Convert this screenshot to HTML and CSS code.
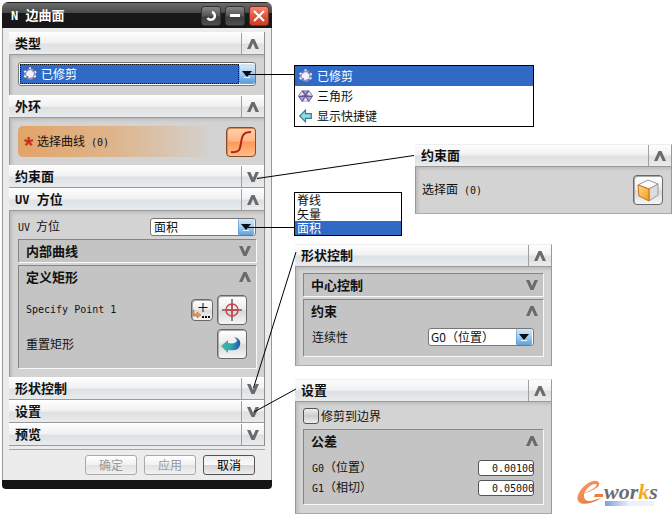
FILE: index.html
```html
<!DOCTYPE html>
<html lang="zh-CN">
<head>
<meta charset="utf-8">
<title>N 边曲面</title>
<link rel="stylesheet" href="styles.css">
</head>
<body>
<svg class="defs" width="0" height="0" aria-hidden="true">
  <defs>
    <linearGradient id="g-arrow" x1="0" y1="0" x2="0" y2="1"><stop offset="0" stop-color="#d3e8f7"/><stop offset=".5" stop-color="#a5cdef"/><stop offset="1" stop-color="#5f9fdc"/></linearGradient>
    <linearGradient id="g-swirl" x1="0" y1="0" x2="1" y2="0"><stop offset="0" stop-color="#45b9a0"/><stop offset=".5" stop-color="#2fa9b4"/><stop offset="1" stop-color="#2456a8"/></linearGradient>
    <linearGradient id="g-face" x1="0" y1="0" x2="1" y2="1"><stop offset="0" stop-color="#ffd98a"/><stop offset="1" stop-color="#f79a1c"/></linearGradient>
    <linearGradient id="g-bar" x1="0" y1="0" x2="1" y2="0"><stop offset="0" stop-color="#7f9fd6"/><stop offset="1" stop-color="#e4ebf7"/></linearGradient>
    <linearGradient id="g-e" x1="0" y1="0" x2="1" y2="1"><stop offset="0" stop-color="#f7a070"/><stop offset="1" stop-color="#ea6f35"/></linearGradient>
    <symbol id="up" viewBox="0 0 12 10"><path d="M0 10 4.500 0h3L12 10H8.600L6 4 3.400 10z" fill="#6a6a6a"/></symbol>
    <symbol id="down" viewBox="0 0 12 10"><path d="M0 0 4.500 10h3L12 0H8.600L6 6 3.400 0z" fill="#6a6a6a"/></symbol>
    <symbol id="drop" viewBox="0 0 16 16"><rect width="16" height="16" rx="2" fill="url(#g-arrow)"/><path d="M0 0v16" stroke="#4c86bd"/><path d="M3 5h10l-5 6z" fill="#050d18"/><path d="M5 11.500h6" stroke="#e6f4ff"/></symbol>
    <symbol id="trim" viewBox="0 0 14 14"><path d="M4 3 7 1l3 1 3 3v4l-3 3-3 1-4-2-2-3 1-3z" fill="#8e93b4"/><path d="m4 4 4-1 3 3-1 4-4 1-3-3z" fill="#f2f1ff"/><path d="m1 5 2-1M1 9l2 1M12 4l1 2M11 10l2-1M6 1h2" stroke="#f7f3fa" stroke-width="1.500"/><path d="m3 3 2 1M10 4l2-1M4 11l1-2M10 10l1 2" stroke="#655e92"/></symbol>
    <symbol id="tri" viewBox="0 0 16 14"><path d="m4 1 8 0 4 6-4 6H4L0 7z" fill="#63558f"/><path d="m4 2 3 4-6 1zM12 2 9 6l6 1zM8 8l3 5H5z" fill="#e2dcf5"/><path d="m6 2 2 3 2-3zM2 8l2 4 3-4zM14 8l-2 4-3-4z" fill="#aba0d6"/></symbol>
    <symbol id="back" viewBox="0 0 12 12"><path d="M1 6 6 1v3h5v4H6v3z" fill="#8edbe6" stroke="#367d8b"/></symbol>
  </defs>
</svg>

<main class="board">
  <section class="dialog" aria-label="N 边曲面">
    <header class="titlebar">
      <h1><span class="lat">N </span>边曲面</h1>
      <button class="tb" aria-label="重置"><svg viewBox="0 0 18 18" width="18" height="18"><path d="M10 5a4 4 0 1 1-4.500 6" fill="none" stroke="#fff" stroke-width="2.500"/></svg></button>
      <button class="tb" aria-label="最小化"><svg viewBox="0 0 18 18" width="18" height="18"><path d="M4 8.500h10" stroke="#fff" stroke-width="3"/></svg></button>
      <button class="tb close" aria-label="关闭"><svg viewBox="0 0 18 18" width="18" height="18"><path d="m4 4 10 10M14 4 4 14" stroke="#fff" stroke-width="2"/></svg></button>
    </header>
    <div class="frame">
      <div class="sections">
        <button class="head"><span>类型</span><i><svg class="chev"><use href="#up"/></svg></i></button>
        <div class="content">
          <div class="combo big">
            <select aria-label="类型"><option>已修剪</option><option>三角形</option></select>
            <svg class="pic"><use href="#trim"/></svg>
            <svg class="arrow"><use href="#drop"/></svg>
          </div>
        </div>
        <button class="head"><span>外环</span><i><svg class="chev"><use href="#up"/></svg></i></button>
        <div class="content pick">
          <div class="required"><b>*</b><span>选择曲线<span class="lat"> (0)</span></span></div>
          <button class="tool orange" aria-label="曲线"><svg viewBox="0 0 28 28" width="28" height="28"><path d="M4 24c9 1 9-3 10-9 1-7 2-11 10-11" fill="none" stroke="#b32612" stroke-width="2"/></svg></button>
        </div>
        <button class="head"><span>约束面</span><i><svg class="chev"><use href="#down"/></svg></i></button>
        <button class="head"><span><span class="lat">UV </span>方位</span><i><svg class="chev"><use href="#up"/></svg></i></button>
        <div class="content tall">
          <div class="row">
            <label for="uv"><span class="lat">UV </span>方位</label>
            <div class="combo">
              <select id="uv"><option>脊线</option><option>矢量</option><option selected>面积</option></select>
              <svg class="arrow"><use href="#drop"/></svg>
            </div>
          </div>
          <div class="sub"><button class="subhead"><span>内部曲线</span><svg class="chev"><use href="#down"/></svg></button></div>
          <div class="sub grow">
            <button class="subhead"><span>定义矩形</span><svg class="chev"><use href="#up"/></svg></button>
            <div class="tools">
              <span class="lat">Specify Point 1</span>
              <button class="tool small" aria-label="点构造器"><svg viewBox="0 0 20 20" width="20" height="20"><path d="M11 3v9M6.500 7.500h9" stroke="#111"/><path d="M2 10v4h3v-2l4 3-4 3v-2H1v-6z" fill="#ee9347" stroke="#b96422" stroke-width=".5"/><path d="M10 17h2m1 0h2m1 0h2" stroke="#111" stroke-width="2"/></svg></button>
              <button class="tool" aria-label="指定点"><svg viewBox="0 0 28 28" width="28" height="28"><path d="M14 3v22M4 14h20" stroke="#222"/><circle cx="14" cy="14" r="6" fill="none" stroke="#c8474c" stroke-width="1.500"/><path d="M14 8v12M8 14h12" stroke="#c8474c" stroke-width="1.500"/></svg></button>
            </div>
            <div class="tools">
              <span>重置矩形</span>
              <button class="tool" aria-label="重置矩形"><svg viewBox="0 0 28 28" width="28" height="28"><path d="m3 16 7-6v3c5 1 8 0 9-2 0-2-2-3-3-4 5 1 7 4 6 8-1 5-6 6-12 5v3z" fill="url(#g-swirl)"/></svg></button>
            </div>
          </div>
        </div>
        <button class="head"><span>形状控制</span><i><svg class="chev"><use href="#down"/></svg></i></button>
        <button class="head"><span>设置</span><i><svg class="chev"><use href="#down"/></svg></i></button>
        <button class="head"><span>预览</span><i><svg class="chev"><use href="#down"/></svg></i></button>
      </div>
      <footer class="actions">
        <button disabled>确定</button>
        <button disabled>应用</button>
        <button class="ok">取消</button>
      </footer>
    </div>
  </section>

  <ul class="menu types">
    <li class="on"><svg class="mi"><use href="#trim"/></svg>已修剪</li>
    <li><svg class="mi"><use href="#tri"/></svg>三角形</li>
    <li><svg class="mi"><use href="#back"/></svg>显示快捷键</li>
  </ul>

  <ul class="menu areas">
    <li>脊线</li>
    <li>矢量</li>
    <li class="on">面积</li>
  </ul>

  <section class="callout faces">
    <button class="head"><span>约束面</span><i><svg class="chev"><use href="#up"/></svg></i></button>
    <div class="content pick">
      <span class="plain">选择面<span class="lat"> (0)</span></span>
      <button class="tool" aria-label="面"><svg viewBox="0 0 28 28" width="28" height="28"><path d="m4 9 10-5 10 4-9 5z" fill="#fdfdfd" stroke="#999"/><path d="m15 13 9-5v11l-9 6z" fill="#dcdcdc" stroke="#999"/><path d="m4 9 11 4v12L5 20z" fill="url(#g-face)" stroke="#c8720f"/></svg></button>
    </div>
  </section>

  <section class="callout shape">
    <button class="head"><span>形状控制</span><i><svg class="chev"><use href="#up"/></svg></i></button>
    <div class="content">
      <div class="sub"><button class="subhead"><span>中心控制</span><svg class="chev"><use href="#down"/></svg></button></div>
      <div class="sub">
        <button class="subhead"><span>约束</span><svg class="chev"><use href="#up"/></svg></button>
        <div class="field cont">
          <label for="cont">连续性</label>
          <div class="combo">
            <select id="cont"><option>G0（位置）</option><option>G1（相切）</option></select>
            <svg class="arrow"><use href="#drop"/></svg>
          </div>
        </div>
      </div>
    </div>
  </section>

  <section class="callout settings">
    <button class="head"><span>设置</span><i><svg class="chev"><use href="#up"/></svg></i></button>
    <div class="content">
      <label class="check"><input type="checkbox">修剪到边界</label>
      <div class="sub">
        <button class="subhead"><span>公差</span><svg class="chev"><use href="#up"/></svg></button>
        <div class="field"><label for="g0"><span class="lat">G0</span>（位置）</label><input id="g0" type="text" value="0.001000"></div>
        <div class="field"><label for="g1"><span class="lat">G1</span>（相切）</label><input id="g1" type="text" value="0.050000"></div>
      </div>
    </div>
  </section>

  <svg class="logo" viewBox="0 0 90 30" width="90" height="30" role="img" aria-label="e-works">
    <path d="M29 23h23v5H29z" fill="url(#g-bar)"/>
    <path d="M52 23h26v5H52z" fill="#edf1f9"/>
    <path d="M6 16C14 14 25 9 23 5 21 0 10 4 4 13c-6 9-1 15 10 12 5-1 8-3 11-5-8 3-16 5-17-1-1-7 8-14 12-13 3 2-6 7-14 10z" fill="url(#g-e)"/>
    <path d="M19 16h8v3h-9z" fill="#ee7d3d"/>
    <text x="28" y="21" class="word">wor<tspan class="k">k</tspan>s</text>
  </svg>

  <svg class="leaders" viewBox="0 0 672 515" width="672" height="515" aria-hidden="true">
    <path d="M248 74.500h46M248 227.500h46M257 178.500l157-23M253.500 388 296 252M254 412l42-23"/>
  </svg>
</main>
</body>
</html>
```
FILE: styles.css
```css
* { box-sizing: border-box; }
body {
  margin: 0;
  background: #fff;
  color: #111;
  font: 12px/14px "Noto Sans CJK SC", sans-serif;
}
button, select, input { font: inherit; color: inherit; margin: 0; }
button { padding: 0; border: 0; background: none; }
h1, ul { margin: 0; padding: 0; list-style: none; }
.defs { position: absolute; }
.lat { font-family: "DejaVu Sans Mono", monospace; font-size: 10px; white-space: pre; }
.board { position: relative; min-height: 100vh; padding: 2px; }

/* dialog window */
.dialog {
  width: 270px;
  border-bottom: 9px solid #151515;
  border-radius: 6px 6px 4px 4px;
  overflow: hidden;
}
.titlebar {
  display: flex;
  align-items: center;
  gap: 4px;
  height: 26px;
  padding: 0 3px 0 9px;
  border-top: 1px solid #222;
  background: linear-gradient(#6c6c6c, #4a4a4a 38%, #191919 42%, #161616);
  color: #fff;
}
.titlebar h1 { flex: 1; font-size: 13px; font-weight: bold; }
.titlebar .lat { font-size: 12px; }
.tb {
  width: 20px;
  height: 20px;
  border: 1px solid #333;
  border-radius: 3px;
  background: linear-gradient(#858585, #555 50%, #3d3d3d 55%, #505050);
}
.tb svg { display: block; }
.close { background: linear-gradient(#f28a75, #e0573f 50%, #d03a22); border-color: #7c2a1c; }
.frame {
  padding: 4px 6px 5px;
  border: solid #9a9a9a;
  border-width: 0 1px;
  background: #ececec;
}
.sections { border-right: 1px solid #8d8d8d; }

.head {
  display: flex;
  align-items: stretch;
  width: 100%;
  height: 23px;
  padding-left: 6px;
  border-top: 1px solid #fff;
  border-bottom: 1px solid #999;
  background: linear-gradient(#fdfdfd, #f2f2f2 45%, #dde1e4 55%, #e9ebec);
  font-size: 13px;
  font-weight: bold;
  line-height: 20px;
  text-align: left;
}
.head > span { flex: 1; }
.head .lat { font-size: 12px; }
.head i {
  display: grid;
  place-items: center;
  width: 23px;
  border-left: 1px solid #a0a0a0;
}
.chev { width: 12px; height: 10px; }
.content {
  padding: 7px 8px 9px;
  border-left: 1px solid #999;
  background: #d3d3d3;
  box-shadow: inset 2px 2px 3px #bcbcbc;
}
.tall { display: flex; flex-direction: column; gap: 3px; height: 166px; padding-bottom: 9px; }
.grow { flex: 1; }
.pick { display: flex; align-items: center; height: 47px; padding: 0 8px; }
.faces .pick { padding-left: 6px; }
.required {
  display: flex;
  flex: 1;
  align-items: center;
  height: 31px;
  padding-left: 6px;
  border-radius: 5px 0 0 5px;
  background: linear-gradient(90deg, #e2a468, #dfb48a 45%, #d3d3d3 95%);
}
.required b { width: 13px; color: #c83218; font: bold 24px/20px "Liberation Sans", sans-serif; padding-top: 8px; }
.plain { flex: 1; }

/* drop-downs */
.combo {
  display: grid;
  grid-template-columns: 1fr 17px;
  width: 106px;
  height: 18px;
  border: 1px solid #777;
  border-radius: 3px;
  background: #fff;
}
.combo select {
  grid-area: 1 / 1 / 2 / 3;
  width: 100%;
  height: 16px;
  padding: 0 18px 0 3px;
  border: 0;
  appearance: none;
  background: transparent;
  line-height: 16px;
}
.combo .arrow { grid-area: 1 / 2; width: 16px; height: 16px; pointer-events: none; }
.big { grid-template-columns: 18px 1fr 16px; width: 100%; height: 24px; padding: 1px 0 1px 1px; }
.big select {
  grid-area: 1 / 1 / 2 / 3;
  height: 20px;
  padding-left: 20px;
  border: 1px dotted #e3c97d;
  outline: 1px dotted #111;
  outline-offset: -1px;
  background: #316ac5;
  color: #fff;
  line-height: 18px;
}
.big .pic { grid-area: 1 / 1; width: 14px; height: 14px; margin: 3px; pointer-events: none; }
.big .arrow { grid-area: 1 / 3; height: 20px; background: linear-gradient(#d3e8f7, #5f9fdc); border-radius: 2px; }

.row, .field { display: flex; align-items: center; justify-content: space-between; }
.sub {
  border: solid #858585;
  border-width: 1px 0 0 1px;
  background: #c4c4c4;
  box-shadow: 1px 1px #f8f8f8;
}
.subhead {
  display: flex;
  align-items: center;
  justify-content: space-between;
  width: 100%;
  height: 22px;
  padding: 0 5px 0 7px;
  font-size: 13px;
  font-weight: bold;
}
.tools { display: flex; align-items: center; gap: 4px; padding: 0 9px 4px 7px; }
.grow .subhead { margin-bottom: 7px; }
.tools > span { flex: 1; }
.tool {
  width: 30px;
  height: 30px;
  border: 1px solid #686868;
  border-radius: 4px;
  background: linear-gradient(#fff, #ededed 45%, #dadada 55%, #f5f5f5);
  box-shadow: inset 1px 1px #aaa;
}
.tool svg { display: block; }
.small { width: 22px; height: 22px; }
.orange {
  border-color: #83502f;
  background: linear-gradient(#ffd0ab, #ffb787 45%, #ff9a58 52%, #ffbc8c);
  box-shadow: inset 1px 1px #d98a5a;
}

.actions {
  display: flex;
  justify-content: flex-end;
  gap: 7px;
  margin-top: 3px;
  padding: 5px 10px 0;
  border-top: 1px solid #a5a5a5;
}
.actions button {
  width: 52px;
  height: 20px;
  border: 1px solid #aaa;
  border-radius: 3px;
  background: linear-gradient(#fff, #f1f1f1 48%, #e2e2e2 52%, #f2f2f2);
  color: #999;
  line-height: 16px;
}
.actions .ok { border-color: #555; color: #000; background: linear-gradient(#eee, #fafafa 48%, #d5d5d5 52%, #ececec); }

/* pop-up lists */
.menu { position: absolute; border: 1px solid #000; background: #fff; }
.menu li { display: flex; align-items: center; }
.menu .on { background: #316ac5; color: #fff; }
.types { left: 294px; top: 65px; width: 240px; }
.types li { height: 20px; gap: 4px; padding-left: 3px; }
.types .mi { width: 15px; height: 14px; }
.areas { left: 294px; top: 192px; width: 108px; }
.areas li { height: 14px; padding-left: 2px; }

/* detached panels */
.callout { position: absolute; width: 257px; }
.callout .content { border-right: 1px solid #999; border-bottom: 1px solid #aaa; }
.callout > .head { border-top-color: #eee; border-right: 1px solid #999; }
.faces { left: 415px; top: 144px; }
.shape { left: 295px; top: 244px; }
.shape .content, .settings .content { padding-left: 7px; padding-top: 6px; }
.shape .sub + .sub { margin-top: 3px; }
.cont { padding: 6px 9px 10px 8px; }
.shape select { padding-left: 2px; }
.settings { left: 295px; top: 379px; }
.settings .field { padding: 0 9px 4px 8px; }
.settings .subhead { margin-bottom: 8px; }
.settings .sub { padding-bottom: 4px; }
.field input {
  width: 56px;
  height: 16px;
  padding: 0 0 0 13px;
  border: 1px solid #555;
  border-radius: 3px;
  background: #fff;
  font: 10px/14px "DejaVu Sans Mono", monospace;
}
.check { display: flex; align-items: center; gap: 2px; margin-bottom: 5px; }
.check input {
  width: 16px;
  height: 16px;
  border: 1px solid #555;
  border-radius: 3px;
  appearance: none;
  background: linear-gradient(#eee, #ccc 50%, #eee);
}

.logo { position: absolute; left: 576px; top: 478px; }
.word { font: italic bold 22px "Liberation Serif", serif; fill: #6c6c74; }
.word .k { fill: #f7a823; }
.leaders { position: absolute; left: 0; top: 0; pointer-events: none; }
.leaders path { fill: none; stroke: #000; }
```
